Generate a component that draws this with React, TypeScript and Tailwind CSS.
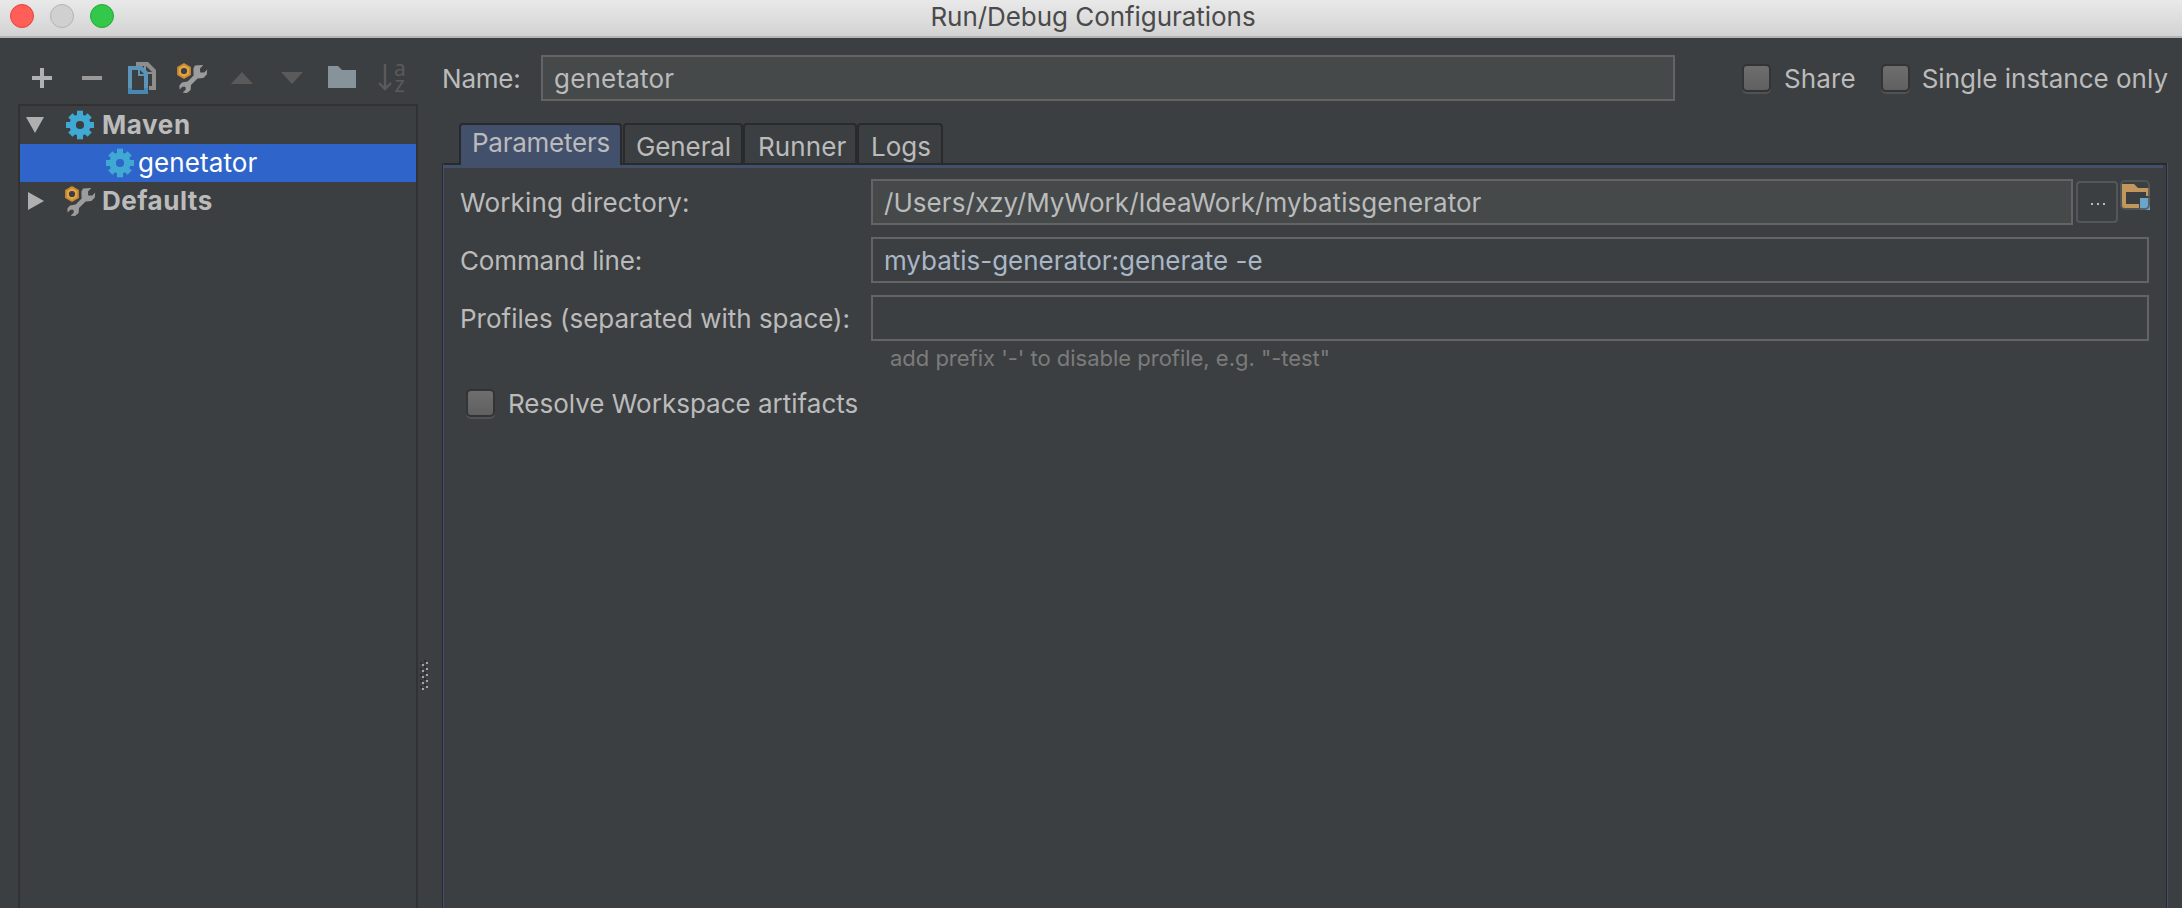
import React from "react";

function Gear({ hole }: { hole: string }) {
  return (
    <svg width="28" height="30" viewBox="-14 -15 28 30" className="shrink-0">
      <g fill="#3fa9d3">
        <circle r="10.6" />
        {[0, 45, 90, 135].map((a) => (
          <rect key={a} x="-3" y={a % 90 ? -13.6 : -14.3} width="6" height={a % 90 ? 27.2 : 28.6} transform={`rotate(${a})`} />
        ))}
      </g>
      <circle r="4.1" fill={hole} />
    </svg>
  );
}

function Wrench() {
  return (
    <svg width="32" height="32" viewBox="0 0 32 32" className="shrink-0">
      <path
        d="M19 3.5 L27.3 3 L24 6.5 L24.2 10.6 L28.4 10.4 L31.2 7.6 L30.8 12.4 L27.4 16 L21.6 16.6 L15 23 L14.6 28 L11 31 L6.6 30.8 L9.8 27.6 L9.4 24.8 L6.4 24.8 L3.6 27.4 L3.4 23.4 L6 20.4 L11.6 19.6 L17.6 13.4 L17.4 6.4 Z"
        fill="#9c9c9c"
      />
      <path d="M8 1 L14.9 5 V13 L8 17 L1.1 13 V5 Z" fill="#c98a33" />
      <path d="M8 3 L13 6 V12 L8 15 L3 12 V6 Z" fill="#e3a443" />
      <circle cx="8" cy="9" r="3.1" fill="#3c3f41" />
    </svg>
  );
}

function Icon({ children }: { children: React.ReactNode }) {
  return (
    <svg width="32" height="34" viewBox="0 0 32 34" className="shrink-0 overflow-visible">
      {children}
    </svg>
  );
}

function Toolbar() {
  return (
    <div className="flex h-[66px] items-start gap-[18px] pt-6 pl-[26px]">
      <Icon>
        <path d="M14 6h4v8h8v4h-8v8h-4v-8H6v-4h8z" fill="#afb1b3" />
      </Icon>
      <Icon>
        <path d="M6 14h20v4H6z" fill="#9a9a9a" />
      </Icon>
      <Icon>
        <path d="M10 0h12l8 8v20h-7v-4h3V12h-8V4h-8z" fill="#8d8d8d" />
        <path d="M20 4v6h6z" fill="#3c3f41" />
        <path d="M2 4h14l6 6v22H2z" fill="#5c94b8" />
        <path d="M2 26h20v6H2z" fill="#4a86b3" />
        <path d="M6 8h6v6h6v14H6z" fill="#3c3f41" />
        <path d="M14 8v4h4z" fill="#3c3f41" />
      </Icon>
      <Wrench />
      <Icon>
        <path d="M16 10 27 22H5z" fill="#5a5a5a" />
      </Icon>
      <Icon>
        <path d="M5 10h22L16 22z" fill="#5a5a5a" />
      </Icon>
      <Icon>
        <path d="M2 4h10l4 4h14v18H2z" fill="#87939a" />
      </Icon>
      <Icon>
        <path d="M9 2v25M3 21l6 6 6-6" fill="none" stroke="#5a5a5a" strokeWidth="2.4" />
        <text x="18" y="14" fontSize="21" fill="#5a5a5a" fontFamily="Noto Sans, sans-serif">a</text>
        <text x="18.5" y="30" fontSize="22" fill="#5a5a5a" fontFamily="Noto Sans, sans-serif">z</text>
      </Icon>
    </div>
  );
}

function Tree() {
  return (
    <div className="ml-[18px] flex w-[400px] flex-1 flex-col border-x-2 border-t-2 border-[#323232] text-white">
      <div className="flex h-[38px] items-center pl-1.5">
        <svg width="18" height="16" viewBox="0 0 18 16"><path d="M0 0h18L9 16z" fill="#afafaf" /></svg>
        <span className="w-[22px]" />
        <Gear hole="#3c3f41" />
        <span className="pl-2 font-bold tracking-[0.6px] text-[#bbbbbb]">Maven</span>
      </div>
      <div className="flex h-[38px] items-center bg-[#2f65ca] pl-[86px]">
        <Gear hole="#2f65ca" />
        <span className="pl-1 tracking-[0.1px]">genetator</span>
      </div>
      <div className="flex h-[38px] items-center pl-2">
        <svg width="16" height="18" viewBox="0 0 16 18"><path d="M0 0v18l16-9z" fill="#afafaf" /></svg>
        <span className="w-5" />
        <Wrench />
        <span className="pl-1.5 font-bold tracking-[0.5px] text-[#bbbbbb]">Defaults</span>
      </div>
    </div>
  );
}

function Splitter() {
  return (
    <div className="flex w-[23px] shrink-0 items-start pt-[622px]">
      <svg width="12" height="32" viewBox="0 0 12 32">
        {[0, 6, 12, 18, 24].map((y) => (
          <g key={y}>
            <path d={`M6 ${y}h2v2h-2zM2 ${y + 2}h2v2h-2z`} fill="#2b2d2f" />
            <path d={`M8 ${y + 2}h2v2h-2zM4 ${y + 4}h2v2h-2z`} fill="#a5a5a5" />
          </g>
        ))}
      </svg>
    </div>
  );
}

function Checkbox({ label, className, spacing }: { label: string; className: string; spacing: string }) {
  return (
    <label className={`flex items-center ${className}`}>
      <span className="h-[28px] w-[29px] shrink-0 rounded-[5px] border-2 border-[#323436] bg-linear-to-b from-[#6e6e6e] to-[#606060] shadow-[0_2px_0_#505254]" />
      <span className={`pt-0.5 whitespace-nowrap ${spacing}`}>{label}</span>
    </label>
  );
}

function Field({ value, className }: { value: string; className: string }) {
  return (
    <div className={`flex h-[46px] items-center border-2 border-[#646464] pt-0.5 pl-[11px] whitespace-nowrap ${className}`}>{value}</div>
  );
}

function Tab({ label, className }: { label: string; className: string }) {
  return (
    <div className={`flex h-[42px] rounded-t-[4px] border-x-2 border-t-2 border-[#282a2b] ${className}`}>{label}</div>
  );
}

export default function App() {
  return (
    <div className="flex h-[908px] w-[2182px] flex-col overflow-hidden bg-[#3c3f41] font-['Inter',sans-serif] text-[26px] leading-[32px] text-[#bbbbbb]">
      <header className="grid h-[38px] shrink-0 grid-cols-[1fr_auto_1fr] items-start border-b-2 border-[#b4b4b4] bg-linear-to-b from-[#e9e9e9] to-[#d3d3d3]">
        <div className="flex gap-4 pt-1 pl-2.5">
          <span className="size-6 rounded-full border border-[#e0443e] bg-[#ff5f57]" />
          <span className="size-6 rounded-full border border-[#b4b4b4] bg-[#d0d0d0]" />
          <span className="size-6 rounded-full border border-[#24a835] bg-[#34c84a]" />
        </div>
        <h1 className="pt-px pl-1 tracking-[-0.05px] text-[#4a4a4a]">Run/Debug Configurations</h1>
      </header>

      <div className="flex min-h-0 flex-1">
        <aside className="flex w-[418px] shrink-0 flex-col">
          <Toolbar />
          <Tree />
        </aside>
        <Splitter />
        <main className="flex flex-1 flex-col pt-[17px]">
          <div className="flex h-[46px] items-center">
            <span className="w-[100px] pt-0.5 pl-px tracking-[-0.2px]">Name:</span>
            <Field value="genetator" className="w-[1134px] bg-[#45494a] tracking-[0.2px]" />
            <Checkbox label="Share" spacing="pl-[13px] tracking-[0.1px]" className="ml-[67px]" />
            <Checkbox label="Single instance only" spacing="pl-[12px]" className="ml-[25px]" />
          </div>

          <div className="z-10 mt-[22px] flex h-10 pl-[18px]">
            <Tab label="Parameters" className="mr-px w-[163px] border-b-0 bg-[#43506c] pt-[2px] pl-[11px] tracking-[-0.25px]" />
            <Tab label="General" className="w-[120px] border-b-2 pt-[6px] pl-[11px] tracking-[-0.1px]" />
            <Tab label="Runner" className="w-[114px] border-b-2 pt-[6px] pl-[13px] tracking-[0.1px]" />
            <Tab label="Logs" className="w-[86px] border-b-2 pt-[6px] pl-[12px]" />
          </div>

          <section className="ml-px flex w-[1726px] flex-1 border-x border-l-[#282a2b] border-r-[#43506c]">
            <div className="flex-1 border-t-2 border-r border-l border-t-[#282a2b] border-r-[#282a2b] border-l-[#43506c]">
              <div className="mr-[3px] h-[3px] bg-[#43506c]" />
              <div className="grid grid-cols-[411px_1fr] items-center gap-y-3 pt-[11px] pl-4">
                <span className="pt-0.5 tracking-[0.15px]">Working directory:</span>
                <div className="flex items-start">
                  <Field value="/Users/xzy/MyWork/IdeaWork/mybatisgenerator" className="w-[1202px] bg-[#45494a] tracking-[0.06px]" />
                  <div className="mt-[2px] ml-[3px] flex h-[42px] w-[42px] items-center justify-center gap-1 rounded-[4px] border-2 border-[#54575a] pt-1 pl-0.5">
                    <span className="size-0.5 bg-[#bbbbbb]" />
                    <span className="size-0.5 bg-[#bbbbbb]" />
                    <span className="size-0.5 bg-[#bbbbbb]" />
                  </div>
                  <svg width="32" height="32" viewBox="0 0 32 32" className="ml-px">
                    <path d="M3 5h12l4 4h12v8h-4v-4H7v12h13v4H3z" fill="#c2975b" />
                    <path d="M21 19h10v12H21z" fill="#6ba5c9" />
                    <rect x="2" y="2" width="28" height="28" rx="4" fill="none" stroke="#54575a" strokeWidth="2" opacity="0.85" />
                  </svg>
                </div>
                <span className="pt-0.5 tracking-[-0.15px]">Command line:</span>
                <Field value="mybatis-generator:generate -e" className="w-[1278px] tracking-[-0.03px] text-[#a9b7c6]" />
                <span className="pt-0.5">Profiles (separated with space):</span>
                <Field value="" className="w-[1278px]" />
              </div>
              <p className="pt-px pl-[446px] text-[22px] leading-[32px] tracking-[-0.02px] text-[#7b7b7b]">add prefix '-' to disable profile, e.g. "-test"</p>
              <Checkbox label="Resolve Workspace artifacts" spacing="pl-[13px]" className="mt-[12px] ml-[22px]" />
            </div>
          </section>
        </main>
      </div>
    </div>
  );
}
